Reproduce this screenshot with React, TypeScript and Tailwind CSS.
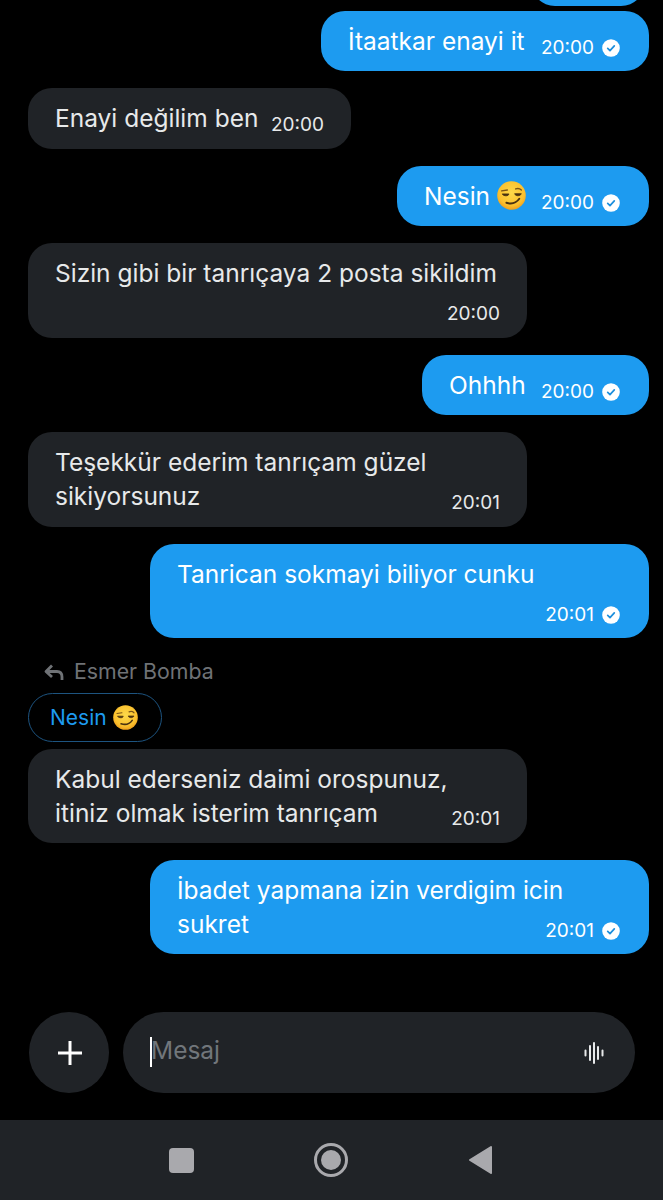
const font = { fontFamily: 'Inter, "Liberation Sans", sans-serif' };

function Smirk({ size = 29 }: { size?: number }) {
  return (
    <svg width={size} height={size} viewBox="0 0 28 28" className="inline-block shrink-0">
      <defs>
        <radialGradient id="smirkFace" cx="50%" cy="40%" r="60%">
          <stop offset="0%" stopColor="#fdd94a" />
          <stop offset="75%" stopColor="#fbc02d" />
          <stop offset="100%" stopColor="#ee9f1c" />
        </radialGradient>
      </defs>
      <circle cx="14" cy="14" r="13.8" fill="url(#smirkFace)" />
      <path d="M4.500 9.500l5.500-.8M18 7.700c2-.8 4-.5 5.500 1" fill="none" stroke="#7a5417" strokeWidth="1.300" strokeLinecap="round" />
      <path d="M5 12.500h6.500c-.3 2.300-4.800 2.500-6.500 0zM17 12.300h6.500c-1 2.500-5.600 2.600-6.500 0z" fill="#4a3210" stroke="#4a3210" strokeWidth=".8" strokeLinejoin="round" />
      <path d="M9 21c4.500 1.500 9.500.3 12.500-3.800" fill="none" stroke="#4a3210" strokeWidth="1.800" strokeLinecap="round" />
    </svg>
  );
}

function Check() {
  return (
    <svg width="18" height="18" viewBox="0 0 18 18" className="shrink-0">
      <circle cx="9" cy="9" r="8.800" fill="#ffffff" />
      <path d="M5.700 9.300l2.300 2.300 4.300-4.700" fill="none" stroke="#1d8fdc" strokeWidth="1.700" strokeLinecap="round" strokeLinejoin="round" />
    </svg>
  );
}

function Sent({ children, className }: { children: React.ReactNode; className: string }) {
  return (
    <div className={"self-end h-[60px] rounded-[24px] bg-[#1d9bf0] text-white pl-[27px] pr-[29px] flex items-center " + className}>
      <span className="flex items-center gap-[7px] text-[24.5px] leading-[34px] -mt-[1px] whitespace-nowrap">{children}</span>
      <span className="flex items-center ml-auto gap-[8px] mt-[14px] text-[19px] leading-[24px]">
        20:00 <Check />
      </span>
    </div>
  );
}

function SentWide({ children }: { children: React.ReactNode }) {
  return (
    <div className="self-end w-[499px] h-[94px] rounded-[24px] bg-[#1d9bf0] text-white pl-[27px] pr-[29px] pt-[13px] relative">
      <div className="text-[24.5px] leading-[34px]">{children}</div>
      <div className="absolute right-[29px] bottom-[11px] flex items-center gap-[8px] text-[19px] leading-[24px]">
        20:01 <Check />
      </div>
    </div>
  );
}

function Recv({ children, time, className }: { children: React.ReactNode; time: string; className: string }) {
  return (
    <div className={"rounded-[24px] bg-[#202327] text-[#e7e9ea] pl-[27px] pr-[27px] pt-[13px] relative " + className}>
      <span className="block text-[24.5px] leading-[34px] whitespace-nowrap">{children}</span>
      <span className="absolute right-[27px] bottom-[12px] text-[19px] leading-[24px]">{time}</span>
    </div>
  );
}

export default function App() {
  return (
    <div className="w-[663px] h-[1200px] bg-black flex flex-col overflow-hidden" style={font}>
      <div className="self-end mr-[18px] h-[6px] w-[114px] overflow-hidden">
        <div className="h-[60px] -mt-[54px] rounded-[24px] bg-[#1d9bf0]" />
      </div>
      <div className="pl-[28px] pr-[14px] pt-[5px] flex flex-col">
        <Sent className="w-[328px]">İtaatkar enayi it</Sent>
        <div className="h-[17px]" />
        <Recv time="20:00" className="w-[323px] h-[61px]">Enayi değilim ben</Recv>
        <div className="h-[17px]" />
        <Sent className="w-[252px]">
          Nesin <Smirk />
        </Sent>
        <div className="h-[17px]" />
        <Recv time="20:00" className="w-[499px] h-[95px]">
          Sizin gibi bir tanrıçaya 2 posta sikildim
        </Recv>
        <div className="h-[17px]" />
        <Sent className="w-[227px]">Ohhhh</Sent>
        <div className="h-[17px]" />
        <Recv time="20:01" className="w-[499px] h-[95px]">
          Teşekkür ederim tanrıçam güzel
          <br />
          sikiyorsunuz
        </Recv>
        <div className="h-[17px]" />
        <SentWide>Tanrican sokmayi biliyor cunku</SentWide>
        <div className="flex items-center gap-[10px] mt-[20px] ml-[16px] h-[28px] text-[21.3px] text-[#6f7276]">
          <svg width="20" height="17" viewBox="0 0 20 17" fill="none" stroke="#6f7276" strokeWidth="2.800" strokeLinejoin="round">
            <path d="M8 1.500L2 7.500l6 5.500" />
            <path d="M2.500 7.500H13c3.500 0 5 2 5 5.500v3" />
          </svg>
          Esmer Bomba
        </div>
        <div className="self-start mt-[7px] h-[49px] w-[134px] rounded-full border border-[#1d5480] text-[#1d9bf0] text-[21px] flex items-center gap-[6px] pl-[21px]">
          Nesin <Smirk size={25} />
        </div>
        <div className="h-[7px]" />
        <Recv time="20:01" className="w-[499px] h-[94px]">
          Kabul ederseniz daimi orospunuz,
          <br />
          itiniz olmak isterim tanrıçam
        </Recv>
        <div className="h-[17px]" />
        <SentWide>
          İbadet yapmana izin verdigim icin
          <br />
          sukret
        </SentWide>
      </div>

      <div className="flex gap-[14px] pl-[29px] pr-[28px] mt-[58px]">
        <div className="w-[80px] h-[81px] rounded-full bg-[#202327] flex items-center justify-center pl-[1px]">
          <svg width="26" height="26" viewBox="0 0 26 26" stroke="#ffffff" strokeWidth="3">
            <path d="M13 1v24M1 13h24" />
          </svg>
        </div>
        <div className="flex-1 h-[81px] rounded-full bg-[#202327] flex items-center pl-[27px] pr-[31px]">
          <span className="w-[2px] h-[30px] bg-white -mt-[2px]" />
          <span className="flex-1 -ml-[1px] text-[24.5px] leading-[34px] text-[#71767b] -mt-[6px]">Mesaj</span>
          <svg width="20" height="22" viewBox="0 0 20 22" stroke="#e7e9ea" strokeWidth="2" strokeLinecap="round">
            <path d="M1.500 8.500v5M6 4v14M10 1v20M14 5v12M18.500 8.500v5" />
          </svg>
        </div>
      </div>

      <div className="mt-auto h-[80px] bg-[#202327] flex items-center justify-center">
        <div className="flex items-center gap-[120px] mr-[2px]">
          <div className="w-[25px] h-[25px] rounded-[4px] bg-[#a9a9ad]" />
          <div className="w-[34px] h-[34px] rounded-full border-[3px] border-[#a9a9ad] flex items-center justify-center">
            <div className="w-[20px] h-[20px] rounded-full bg-[#a9a9ad]" />
          </div>
          <svg width="25" height="30" viewBox="0 0 25 30">
            <path d="M23 2L2 15l21 13z" fill="#a9a9ad" stroke="#a9a9ad" strokeWidth="2" strokeLinejoin="round" />
          </svg>
        </div>
      </div>
    </div>
  );
}
